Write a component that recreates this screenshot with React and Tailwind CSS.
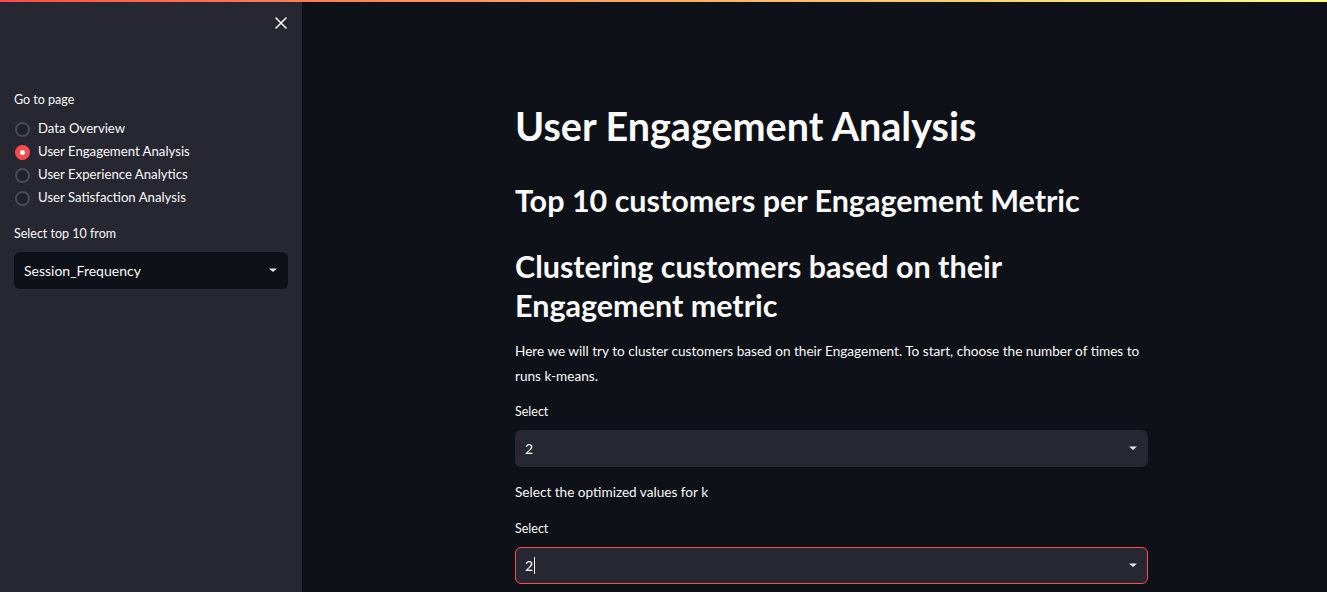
import React from 'react';

const font = { fontFamily: '"Lato", "Noto Sans", sans-serif' };

const Caret = () => (
  <svg width="10" height="10" viewBox="0 0 10 10" className="text-gray-200">
    <path d="M1 3.5 L9 3.5 L5 7 Z" fill="currentColor" />
  </svg>
);

const Radio = ({ label, checked }) => (
  <div className="flex items-center h-[23px]">
    {checked ? (
      <div className="w-[15px] h-[15px] rounded-full bg-[#ff4b4b] flex items-center justify-center">
        <div className="w-[5px] h-[5px] rounded-full bg-white" />
      </div>
    ) : (
      <div className="w-[15px] h-[15px] rounded-full border-2 border-[#4b4c55] bg-[#20212a]" />
    )}
    <span className="ml-[8px] text-[13.2px] text-[#fafafa]">{label}</span>
  </div>
);

const SelectBox = ({ value, dark, focused, cursor }) => (
  <div
    className={`flex items-center justify-between h-[37px] rounded-[6px] pl-[9px] pr-[9px] ${
      dark ? 'bg-[#0e1117]' : 'bg-[#262730]'
    } ${focused ? 'border border-[#ff4b4b]' : 'border border-transparent'}`}
  >
    <div className="flex items-center text-[14px] text-[#fafafa]">
      {value}
      {cursor && <span className="w-px h-[17px] bg-[#fafafa] ml-px" />}
    </div>
    <Caret />
  </div>
);

export default function App() {
  return (
    <div className="w-[1327px] h-[592px] overflow-hidden bg-[#0e1117] relative" style={font}>
      <div className="absolute top-0 left-0 right-0 h-[2px] bg-gradient-to-r from-[#ff4b4b] to-[#fffd80] z-10" />
      <div className="flex h-full">
        <aside className="w-[302px] shrink-0 bg-[#262730] h-full px-[14px]">
          <div className="flex justify-end pt-[17px] pr-[1px]">
            <svg width="12" height="12" viewBox="0 0 12 12">
              <path d="M1 1 L11 11 M11 1 L1 11" stroke="#fafafa" strokeWidth="1.6" strokeLinecap="round" />
            </svg>
          </div>
          <div className="mt-[62px] text-[12.5px] text-[#fafafa]">Go to page</div>
          <div className="mt-[8px] flex flex-col pl-px">
            <Radio label="Data Overview" />
            <Radio label="User Engagement Analysis" checked />
            <Radio label="User Experience Analytics" />
            <Radio label="User Satisfaction Analysis" />
          </div>
          <div className="mt-[15px] text-[12.5px] text-[#fafafa]">Select top 10 from</div>
          <div className="mt-[8px]">
            <SelectBox value="Session_Frequency" dark />
          </div>
        </aside>
        <main className="flex-1 pl-[213px]">
          <div className="w-[633px] text-[#fafafa]">
            <h1 className="mt-[102px] text-[39.5px] font-bold leading-[48px]">User Engagement Analysis</h1>
            <h2 className="mt-[31px] text-[30.5px] font-bold leading-[38px]">Top 10 customers per Engagement Metric</h2>
            <h2 className="mt-[28px] text-[30.5px] font-bold leading-[39px]">
              Clustering customers based on their
              <br />
              Engagement metric
            </h2>
            <p className="mt-[14px] text-[13.6px] leading-[25px]">
              Here we will try to cluster customers based on their Engagement. To start, choose the number of times to runs k-means.
            </p>
            <div className="mt-[14px] text-[12.5px]">Select</div>
            <div className="mt-[8px]">
              <SelectBox value="2" />
            </div>
            <div className="mt-[15px] text-[13.6px]">Select the optimized values for k</div>
            <div className="mt-[18px] text-[12.5px]">Select</div>
            <div className="mt-[8px]">
              <SelectBox value="2" focused cursor />
            </div>
          </div>
        </main>
      </div>
    </div>
  );
}
